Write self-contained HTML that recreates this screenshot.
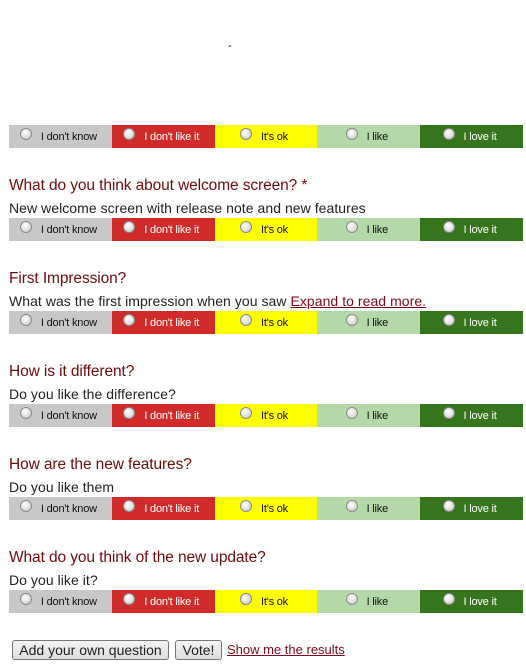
<!DOCTYPE html>
<html><head><style>
body{margin:0;width:526px;height:667px;background:#fff;font-family:"Liberation Sans",Arial,sans-serif;position:relative;overflow:hidden}
.bar{position:absolute;left:9px;width:514px;height:23px;display:flex}
.c{flex:1;display:flex;align-items:center;justify-content:center;font-size:11px;letter-spacing:-0.2px;padding-right:4px}
.c i{width:12px;height:12px;border-radius:50%;border:1px solid #8a8a8a;background:radial-gradient(circle at 40% 35%,#fff,#ddd 60%,#bbb);margin-right:9px;margin-top:-5px;box-sizing:border-box}
.g{background:#c8c8c8;color:#111}.r{background:#d12a2a;color:#fff}.y{background:#ffff00;color:#111}.l{background:#b5d8a9;color:#111}.d{background:#36741e;color:#fff}
.t{position:absolute;left:9px;font-size:15.5px;color:#6e0c0c;letter-spacing:-0.1px}
.s{position:absolute;left:9px;font-size:14px;color:#222;letter-spacing:0.05px}
a{color:#7a0a1a}
.btn{position:absolute;top:640px;height:20px;border:1px solid #777;border-radius:3px;background:linear-gradient(#f4f4f4,#ddd);font-size:14px;color:#222;line-height:19px;box-sizing:border-box;text-align:center}
</style></head><body>
<div style="position:absolute;left:228px;top:40px;font-size:11px">-</div>
<div class="bar" style="top:125px"><div class="c g"><i></i>I don't know</div><div class="c r"><i></i>I don't like it</div><div class="c y"><i></i>It's ok</div><div class="c l"><i></i>I like</div><div class="c d"><i></i>I love it</div></div>

<div class="t" style="top:177px">What do you think about welcome screen? *</div>
<div class="s" style="top:200px">New welcome screen with release note and new features</div>
<div class="bar" style="top:218px"><div class="c g"><i></i>I don't know</div><div class="c r"><i></i>I don't like it</div><div class="c y"><i></i>It's ok</div><div class="c l"><i></i>I like</div><div class="c d"><i></i>I love it</div></div>

<div class="t" style="top:270px">First Impression?</div>
<div class="s" style="top:293px">What was the first impression when you saw <a href="#">Expand to read more.</a></div>
<div class="bar" style="top:311px"><div class="c g"><i></i>I don't know</div><div class="c r"><i></i>I don't like it</div><div class="c y"><i></i>It's ok</div><div class="c l"><i></i>I like</div><div class="c d"><i></i>I love it</div></div>

<div class="t" style="top:363px">How is it different?</div>
<div class="s" style="top:386px">Do you like the difference?</div>
<div class="bar" style="top:404px"><div class="c g"><i></i>I don't know</div><div class="c r"><i></i>I don't like it</div><div class="c y"><i></i>It's ok</div><div class="c l"><i></i>I like</div><div class="c d"><i></i>I love it</div></div>

<div class="t" style="top:456px">How are the new features?</div>
<div class="s" style="top:479px">Do you like them</div>
<div class="bar" style="top:497px"><div class="c g"><i></i>I don't know</div><div class="c r"><i></i>I don't like it</div><div class="c y"><i></i>It's ok</div><div class="c l"><i></i>I like</div><div class="c d"><i></i>I love it</div></div>

<div class="t" style="top:549px">What do you think of the new update?</div>
<div class="s" style="top:572px">Do you like it?</div>
<div class="bar" style="top:590px"><div class="c g"><i></i>I don't know</div><div class="c r"><i></i>I don't like it</div><div class="c y"><i></i>It's ok</div><div class="c l"><i></i>I like</div><div class="c d"><i></i>I love it</div></div>

<div class="btn" style="left:12px;width:157px">Add your own question</div>
<div class="btn" style="left:175px;width:47px">Vote!</div>
<div style="position:absolute;left:227px;top:642px;font-size:13px"><a href="#">Show me the results</a></div>
</body></html>
